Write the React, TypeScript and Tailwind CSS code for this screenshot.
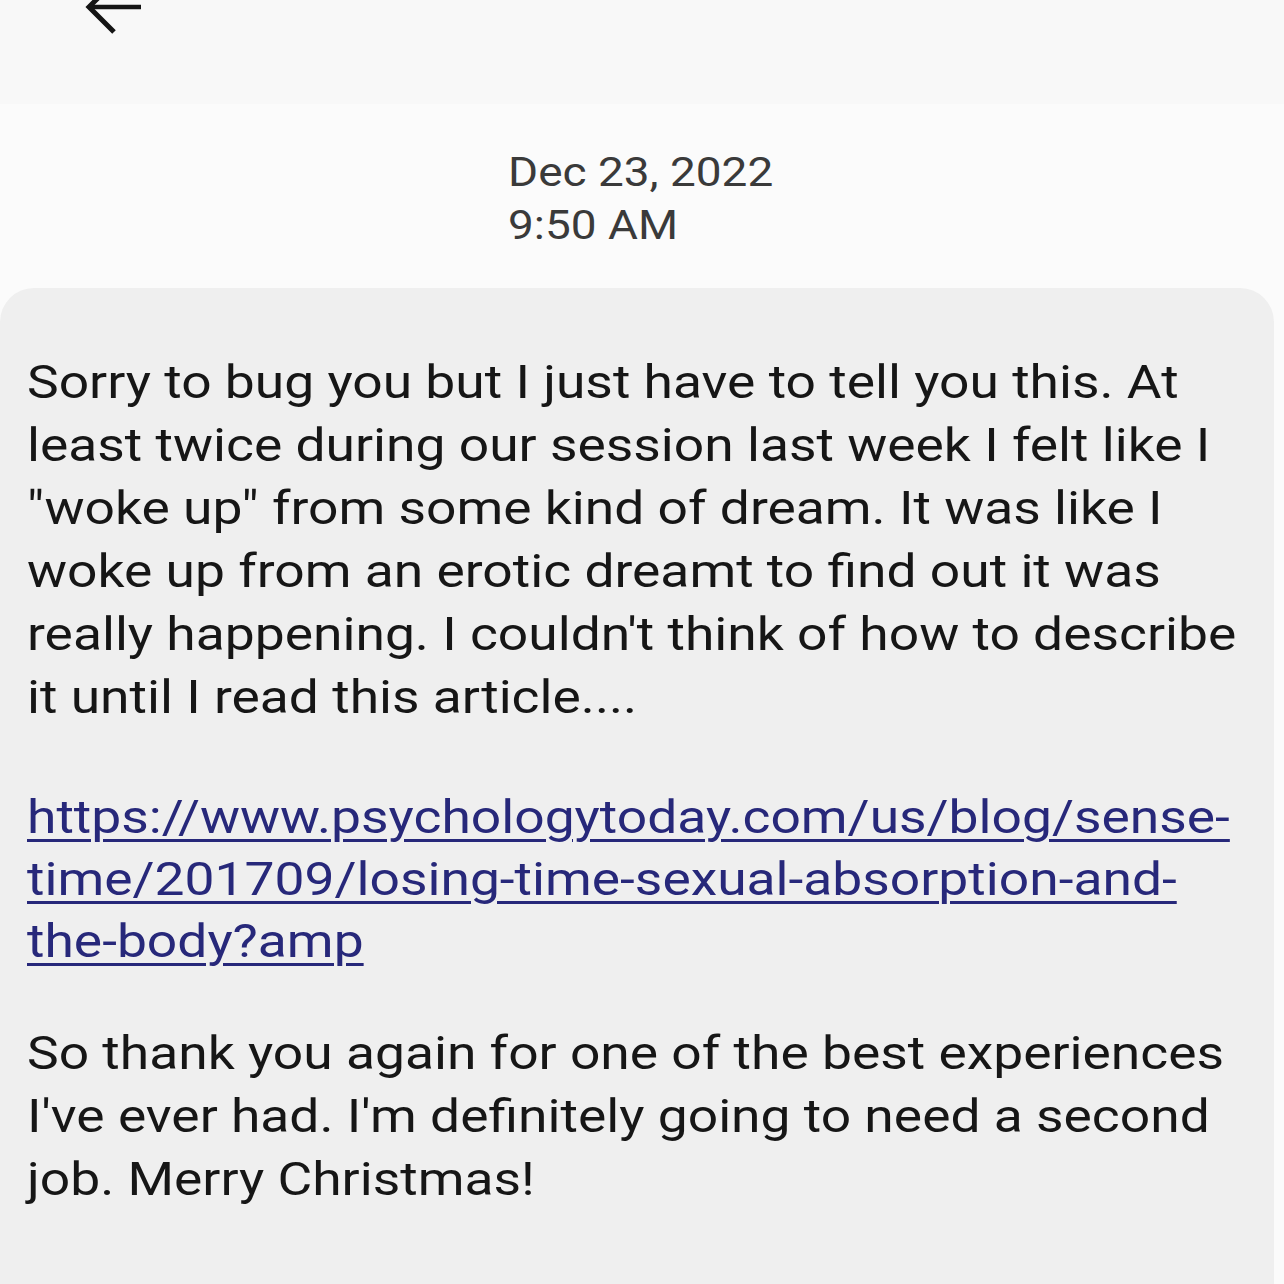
export default function App() {
  return (
    <div className="w-[1284px] h-[1284px] overflow-hidden bg-[#fbfbfb] font-['Roboto',sans-serif] flex flex-col">
      {/* top bar, scrolled so only the arrow's lower half shows */}
      <div className="h-[104px] shrink-0 bg-[#f8f8f8] relative">
        <svg className="absolute left-0 top-0" width="200" height="50" viewBox="0 0 200 50" fill="none">
          <path d="M141 7H91" stroke="#151515" strokeWidth="4.5" />
          <path d="M113 -17L89 7L114 32" stroke="#151515" strokeWidth="5" strokeLinejoin="miter" />
        </svg>
      </div>

      <div className="shrink-0 flex flex-col items-center pt-[42px] pb-[36px] text-[41px] leading-[53px] text-[#3a3a3a]">
        <div className="w-[268px] origin-left scale-x-[1.12] whitespace-nowrap">Dec 23, 2022</div>
        <div className="w-[268px] origin-left scale-x-[1.12] whitespace-nowrap">9:50 AM</div>
      </div>

      <div className="flex-1 mr-[10px] rounded-t-[34px] bg-[#efefef] pl-[27px] pt-[63px] text-[46px] leading-[63px] text-[#161616]">
        <div className="origin-left scale-x-[1.16] whitespace-nowrap">
          <p>
            Sorry to bug you but I just have to tell you this. At
            <br />
            least twice during our session last week I felt like I
            <br />
            "woke up" from some kind of dream. It was like I
            <br />
            woke up from an erotic dreamt to find out it was
            <br />
            really happening. I couldn't think of how to describe
            <br />
            it until I read this article....
          </p>
          <p className="mt-[57px] leading-[62px] text-[#27287a] underline decoration-[3px] underline-offset-[6px]">
            https://www.psychologytoday.com/us/blog/sense-
            <br />
            time/201709/losing-time-sexual-absorption-and-
            <br />
            the-body?amp
          </p>
          <p className="mt-[50px]">
            So thank you again for one of the best experiences
            <br />
            I've ever had. I'm definitely going to need a second
            <br />
            job. Merry Christmas!
          </p>
        </div>
      </div>
    </div>
  )
}
